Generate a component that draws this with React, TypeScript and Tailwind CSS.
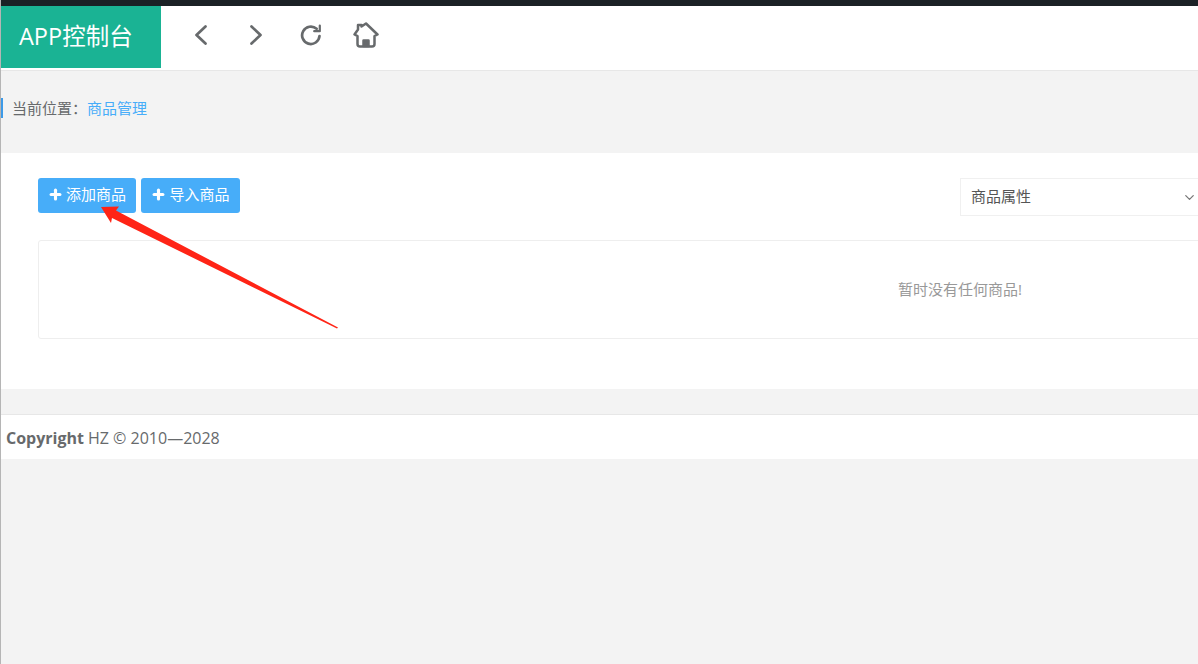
import { ChevronDown, Plus } from 'lucide-react';

const FONT = 'font-["Open_Sans","Noto_Sans_CJK_SC",sans-serif]';

function NavArrow({ dir }: { dir: 'left' | 'right' }) {
  return (
    <svg width="14" height="20" viewBox="0 0 14 20" fill="none" stroke="#676a6c" strokeWidth="2.7" strokeLinecap="round" strokeLinejoin="round">
      <path d={dir === 'left' ? 'M11.5 1.5 2.5 10l9 8.5' : 'M2.5 1.5l9 8.5-9 8.5'} />
    </svg>
  );
}

function RefreshIcon() {
  return (
    <svg width="22" height="22" viewBox="0 0 22 22" fill="none" stroke="#676a6c" strokeWidth="2.7" strokeLinecap="round" strokeLinejoin="round">
      <path d="M19.5 12a8.7 8.7 0 1 1-2.9-7.2" />
      <path d="M19.8 1.5v5.7h-5.6" strokeWidth="2.2" />
    </svg>
  );
}

function HomeIcon() {
  return (
    <svg width="26" height="26" viewBox="0 0 26 26" fill="none" stroke="#676a6c" strokeWidth="2.5" strokeLinejoin="round" strokeLinecap="round">
      <path d="M5 7.5V3h3.5v1.5L13 1.5 24.5 12.5l-3 1.5v8a2.5 2.5 0 0 1-2.5 2.5H7A2.5 2.5 0 0 1 4.5 22v-8l-3-1.5z" />
      <path d="M10.5 24v-5.5h5V24z" fill="#676a6c" />
    </svg>
  );
}

function ActionButton({ label, width }: { label: string; width: string }) {
  return (
    <button type="button" className={`flex h-[35px] ${width} items-center justify-center gap-[3px] rounded-[3px] bg-[#47adf9] pb-[2px] text-[15px] text-white`}>
      <Plus size={15} strokeWidth={5} />
      <span>{label}</span>
    </button>
  );
}

export default function App() {
  return (
    <div className={`relative h-[664px] w-[1198px] overflow-hidden border-l border-[#b5b5b5] bg-[#f3f3f3] text-[#676a6c] ${FONT}`}>
      <div className="h-[6px] bg-[#1b2126]" />

      <header className="flex h-[65px] border-b border-[#e7e7e7] bg-white">
        <div className="flex h-[62px] w-[160px] items-center bg-[#1ab394] pl-[18px] text-[23.5px] text-white">APP控制台</div>
        <nav className="flex items-center pb-[7px] pl-[33px]">
          <NavArrow dir="left" />
          <span className="ml-[41px]"><NavArrow dir="right" /></span>
          <span className="ml-[37px]"><RefreshIcon /></span>
          <span className="ml-[31px]"><HomeIcon /></span>
        </nav>
      </header>

      <div className="flex h-[82px] items-center pb-[8px]">
        <span className="-ml-px h-[20px] w-[3px] bg-[#3d9ae8]" />
        <p className="ml-[9px] text-[15px]">
          当前位置：<span className="text-[#47adf9]">商品管理</span>
        </p>
      </div>

      <main className="h-[236px] bg-white pl-[37px] pt-[25px]">
        <div className="flex items-start justify-between">
          <div className="flex gap-[5px]">
            <ActionButton label="添加商品" width="w-[98px]" />
            <ActionButton label="导入商品" width="w-[99px]" />
          </div>
          <div className="flex h-[38px] w-[238px] items-center justify-between border border-r-0 border-[#f0f0f0] pb-[2px] pl-[10px] pr-[1px] text-[15px] text-[#555]">
            <span>商品属性</span>
            <ChevronDown size={15} strokeWidth={2} className="mt-[2px] text-[#777]" />
          </div>
        </div>
        {/* the box runs past the window, its text is centred on the full width */}
        <div className="mt-[24px] flex h-[99px] w-[1844px] items-center justify-center rounded-[3px] border border-[#eee] text-[15px] text-[#999]">
          暂时没有任何商品!
        </div>
      </main>

      <footer className="mt-[25px] flex h-[45px] items-center border-t border-[#e7e7e7] bg-white pl-[5px] pt-[2px] text-base">
        <strong className="font-bold">Copyright</strong>
        <span className="ml-1">HZ © 2010—2028</span>
      </footer>

      {/* red annotation drawn over the page */}
      <svg className="pointer-events-none absolute left-[-1px] top-0" width="1198" height="664">
        <path d="M101 207 L119 206.5 L116 210.5 L338 327.5 L337 328.5 L112 218 L111 223 Z" fill="#ff2416" />
      </svg>
    </div>
  );
}
